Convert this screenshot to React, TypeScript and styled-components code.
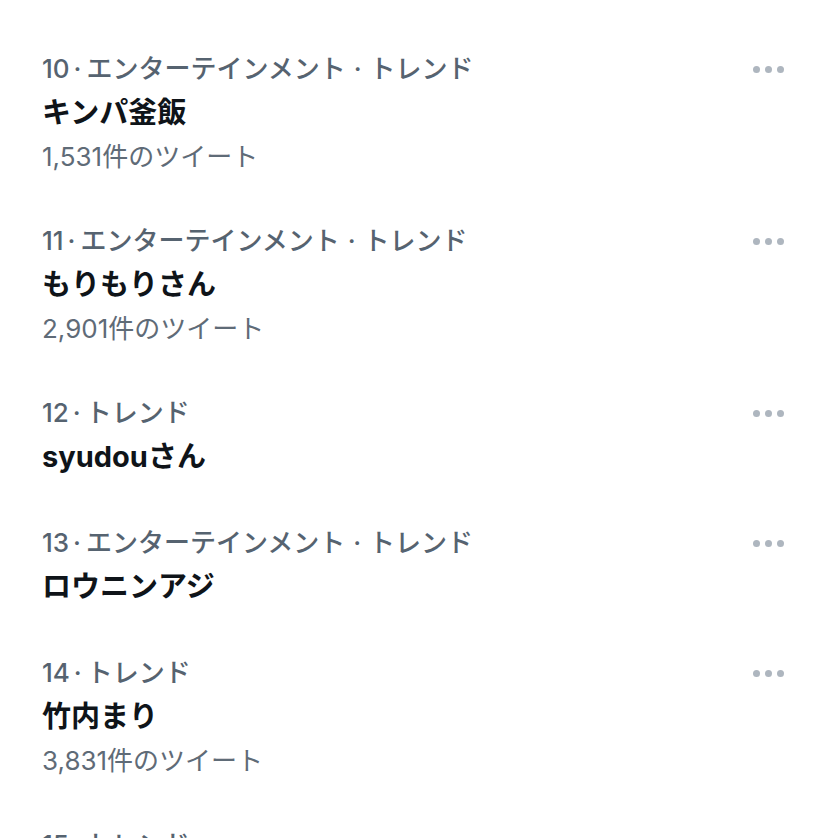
import React from 'react';
import styled, { createGlobalStyle } from 'styled-components';

const GlobalStyle = createGlobalStyle`
    html, body {
        margin: 0;
        padding: 0;
        background: #ffffff;
    }
    body {
        font-family: "Inter", "Noto Sans CJK JP", sans-serif;
        -webkit-font-smoothing: antialiased;
    }
`;

const TrendList = styled.ul`
    list-style: none;
    margin: 0;
    padding: 27px 0 0 0;
    height: 838px;
    overflow: hidden;
    box-sizing: border-box;
`;

const TrendItem = styled.li`
    display: flex;
    justify-content: space-between;
    align-items: flex-start;
    padding: 22px 44px 21px 42px;
`;

const TrendBody = styled.div`
    display: flex;
    flex-direction: column;
`;

const Meta = styled.div`
    font-size: 26px;
    line-height: 40px;
    font-weight: 500;
    color: #566370;
    white-space: nowrap;
`;

const Sep = styled.span<{ $wide?: boolean }>`
    margin: ${(p) => (p.$wide ? '0 8px' : '0 5px 0 4px')};
`;

const Title = styled.div`
    font-size: 29px;
    line-height: 47px;
    font-weight: 700;
    color: #0f1419;
    white-space: nowrap;
`;

const Count = styled.div`
    font-size: 26px;
    line-height: 42px;
    font-weight: 400;
    color: #5f6b77;
    white-space: nowrap;
`;

const MoreButton = styled.div`
    display: flex;
    gap: 5px;
    height: 40px;
    align-items: center;
    span {
        width: 7px;
        height: 7px;
        border-radius: 50%;
        background: #aeb6bf;
    }
`;

type Trend = {
    rank: number;
    category?: string;
    name: string;
    count?: string;
};

const trends: Trend[] = [
    { rank: 10, category: 'エンターテインメント', name: 'キンパ釜飯', count: '1,531件のツイート' },
    { rank: 11, category: 'エンターテインメント', name: 'もりもりさん', count: '2,901件のツイート' },
    { rank: 12, name: 'syudouさん' },
    { rank: 13, category: 'エンターテインメント', name: 'ロウニンアジ' },
    { rank: 14, name: '竹内まり', count: '3,831件のツイート' },
    { rank: 15, name: '' },
];

const App = () => {
    return (
        <>
            <GlobalStyle />
            <TrendList>
                {trends.map((t) => (
                    <TrendItem key={t.rank}>
                        <TrendBody>
                            <Meta>
                                {t.rank}
                                <Sep>·</Sep>
                                {t.category && (
                                    <>
                                        {t.category}
                                        <Sep $wide>·</Sep>
                                    </>
                                )}
                                トレンド
                            </Meta>
                            {t.name && <Title>{t.name}</Title>}
                            {t.count && <Count>{t.count}</Count>}
                        </TrendBody>
                        <MoreButton>
                            <span />
                            <span />
                            <span />
                        </MoreButton>
                    </TrendItem>
                ))}
            </TrendList>
        </>
    );
};

export default App;
